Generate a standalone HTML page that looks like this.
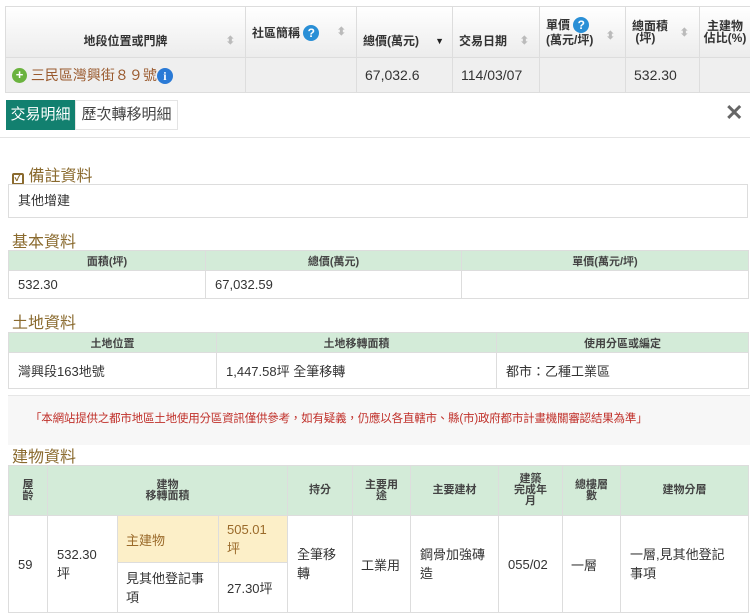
<!DOCTYPE html>
<html><head><meta charset="utf-8"><style>
*{margin:0;padding:0;box-sizing:border-box}
body{width:750px;height:616px;overflow:hidden;background:#fff;font-family:"Liberation Sans","Noto Sans CJK TC",sans-serif;color:#333;position:relative}
.a{position:absolute}
table{border-collapse:collapse;position:absolute;table-layout:fixed}
td,th{border:1px solid #ddd;font-size:13px}
.gh th{background:#d3ebd8;font-weight:bold;font-size:11px;color:#444;text-align:center;height:20px}
.gd td{padding:0 9px;height:28px;text-align:left}
.ttl{position:absolute;left:12px;font-size:16px;color:#8a6a2e}
.top th{font-weight:bold;color:#333}
.s{position:absolute;color:#bbb;font-size:11px}
</style></head><body>
<table class="top" style="left:5px;top:6px;width:745px">
<colgroup><col style="width:240px"><col style="width:111px"><col style="width:96px"><col style="width:87px"><col style="width:86px"><col style="width:74px"><col style="width:51px"></colgroup>
<tr style="height:51px;background:linear-gradient(#fff,#ececec)">
<th style="font-size:12px;position:relative;vertical-align:bottom;padding-bottom:8px">地段位置或門牌<span class="s" style="right:10px;bottom:10px">⬍</span></th>
<th style="font-size:12px;text-align:left;vertical-align:middle;padding-left:6px;position:relative">社區簡稱 <span style="display:inline-block;width:16px;height:16px;border-radius:50%;background:#2a8fd6;color:#fff;font-size:12px;font-weight:bold;text-align:center;line-height:16px">?</span><span class="s" style="right:10px;top:18px">⬍</span></th>
<th style="font-size:12px;text-align:left;padding-left:6px;vertical-align:bottom;padding-bottom:8px;position:relative">總價(萬元)<span class="a" style="right:8px;bottom:11px;color:#222;font-size:9px">▼</span></th>
<th style="font-size:12px;text-align:left;padding-left:6px;vertical-align:bottom;padding-bottom:8px;position:relative">交易日期<span class="s" style="right:10px;bottom:10px">⬍</span></th>
<th style="font-size:12px;text-align:left;padding-left:6px;line-height:15px;position:relative">單價 <span style="display:inline-block;width:16px;height:16px;border-radius:50%;background:#2a8fd6;color:#fff;font-size:12px;font-weight:bold;text-align:center;line-height:16px">?</span><br>(萬元/坪)<span class="s" style="right:10px;top:22px">⬍</span></th>
<th style="font-size:12px;line-height:12px;text-align:left;padding-left:6px;position:relative">總面積<br>&nbsp;(坪)<span class="s" style="right:10px;top:20px">⬍</span></th>
<th style="font-size:12px;line-height:12px">主建物<br>佔比(%)</th>
</tr>
<tr style="height:35px;background:#efefef">
<td style="color:#9a5a2e;padding-left:6px;font-size:14px"><span style="display:inline-block;width:15px;height:15px;border-radius:50%;background:#6bb33f;color:#fff;font-size:13px;text-align:center;line-height:14px;font-weight:bold;vertical-align:1px">+</span> 三民區灣興街８９號<span style="display:inline-block;width:16px;height:16px;border-radius:50%;background:#2a7ad6;color:#fff;font-size:12px;font-weight:bold;text-align:center;line-height:16px;font-family:'Liberation Serif'">i</span></td>
<td></td><td style="padding-left:8px;font-size:14px">67,032.6</td><td style="padding-left:8px;font-size:14px">114/03/07</td><td></td><td style="padding-left:8px;font-size:14px">532.30</td><td></td></tr>
</table>
<div class="a" style="left:6px;top:100px;width:69px;height:30px;background:#12806f;color:#fff;font-size:15px;line-height:30px;text-align:center">交易明細</div>
<div class="a" style="left:75px;top:100px;width:103px;height:30px;background:#fff;border:1px solid #e4e4e4;color:#444;font-size:15px;line-height:28px;text-align:center">歷次轉移明細</div>
<div class="a" style="left:725px;top:100px;font-size:22px;color:#666;font-weight:bold">✕</div>
<div class="a" style="left:0;top:137px;width:750px;height:1px;background:#e4e4e4"></div>
<div class="ttl" style="top:162px"><span style="display:inline-block;width:12px;height:12px;border:2px solid #8a6a2e;border-radius:2px;font-size:10px;line-height:8px;text-align:center;font-weight:bold;vertical-align:0px">✓</span> 備註資料</div>
<div class="a" style="left:8px;top:184px;width:740px;height:34px;border:1px solid #ddd;font-size:13px;line-height:32px;padding-left:9px">其他增建</div>
<div class="ttl" style="top:228px">基本資料</div>
<table style="left:8px;top:250px;width:740px">
<colgroup><col style="width:197px"><col style="width:256px"><col style="width:287px"></colgroup>
<tr class="gh"><th>面積(坪)</th><th>總價(萬元)</th><th>單價(萬元/坪)</th></tr>
<tr class="gd"><td>532.30</td><td>67,032.59</td><td></td></tr></table>
<div class="ttl" style="top:309px">土地資料</div>
<table style="left:8px;top:332px;width:740px">
<colgroup><col style="width:208px"><col style="width:280px"><col style="width:252px"></colgroup>
<tr class="gh"><th>土地位置</th><th>土地移轉面積</th><th>使用分區或編定</th></tr>
<tr class="gd"><td style="height:36px">灣興段163地號</td><td>1,447.58坪 全筆移轉</td><td>都市：乙種工業區</td></tr></table>
<div class="a" style="left:8px;top:395px;width:742px;height:50px;background:#f7f7f7;border-top:1px solid #e6e6e6;color:#c0302a;font-size:11.5px;line-height:46px;padding-left:22px;letter-spacing:-0.2px">「本網站提供之都市地區土地使用分區資訊僅供參考，如有疑義，仍應以各直轄市、縣(市)政府都市計畫機關審認結果為準」</div>
<div class="ttl" style="top:443px">建物資料</div>
<table style="left:8px;top:465px;width:740px">
<colgroup><col style="width:39px"><col style="width:70px"><col style="width:101px"><col style="width:69px"><col style="width:65px"><col style="width:58px"><col style="width:88px"><col style="width:64px"><col style="width:58px"><col style="width:128px"></colgroup>
<tr class="gh" style="height:50px;line-height:11px"><th>屋<br>齡</th><th colspan="3">建物<br>移轉面積</th><th>持分</th><th>主要用<br>途</th><th>主要建材</th><th>建築<br>完成年<br>月</th><th>總樓層<br>數</th><th>建物分層</th></tr>
<tr style="height:47px;font-size:13px"><td rowspan="2" style="padding-left:9px">59</td><td rowspan="2" style="padding-left:9px;line-height:19px">532.30<br>坪</td><td style="background:#fcefc8;color:#9a6a2a;padding-left:8px">主建物</td><td style="background:#fcefc8;color:#9a6a2a;padding-left:8px;line-height:19px">505.01<br>坪</td><td rowspan="2" style="padding-left:9px;line-height:19px">全筆移<br>轉</td><td rowspan="2" style="padding-left:8px">工業用</td><td rowspan="2" style="padding-left:9px;line-height:19px">鋼骨加強磚<br>造</td><td rowspan="2" style="padding-left:9px">055/02</td><td rowspan="2" style="padding-left:8px">一層</td><td rowspan="2" style="padding-left:9px;line-height:19px">一層,見其他登記<br>事項</td></tr>
<tr style="height:50px"><td style="padding-left:8px;line-height:19px">見其他登記事<br>項</td><td style="padding-left:8px">27.30坪</td></tr>
</table>
</body></html>
